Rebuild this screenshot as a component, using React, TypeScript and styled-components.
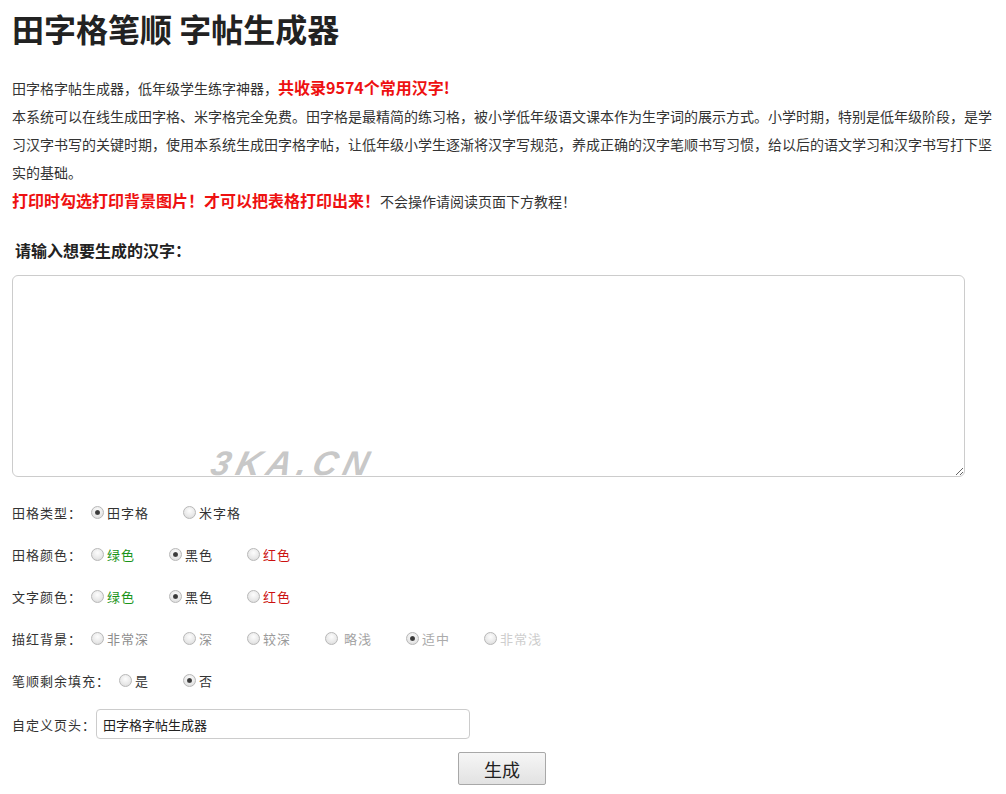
import React from "react";
import styled, { createGlobalStyle } from "styled-components";

const Global = createGlobalStyle`
  html, body { margin: 0; padding: 0; background: #fff; }
  body {
    font-family: "Noto Sans CJK SC", "Noto Sans", sans-serif;
    color: #333;
    font-size: 13px;
  }
`;

const Page = styled.div`
  width: 980px;
  padding: 0 12px;
`;

const Title = styled.h1`
  margin: 8px 0 0;
  font-size: 32px;
  line-height: 40px;
  font-weight: 700;
  color: #222;
`;

const Intro = styled.p`
  margin: 25px 0 0;
  font-size: 14px;
  line-height: 28px;
  width: 982px;
`;

const Justified = styled.span`
  display: block;
  width: 980px;
  text-align: justify;
  text-align-last: justify;
`;

const Red = styled.span<{ $size: number }>`
  color: #ee1111;
  font-weight: 700;
  font-size: ${(p) => p.$size}px;
`;

const Notice = styled.p`
  margin: 0;
  font-size: 14px;
  line-height: 28px;
`;

const InputLabel = styled.h3`
  margin: 23px 0 0 3px;
  font-size: 16px;
  line-height: 24px;
  font-weight: 700;
  color: #222;
`;

const AreaWrap = styled.div`
  position: relative;
  margin-top: 13px;
  width: 953px;
`;

const Area = styled.textarea`
  display: block;
  width: 953px;
  height: 202px;
  box-sizing: border-box;
  border: 1px solid #ccc;
  border-radius: 6px;
  padding: 6px;
  font-family: inherit;
  font-size: 14px;
  outline: none;
`;

const Watermark = styled.div`
  position: absolute;
  left: 200px;
  top: 171px;
  font-family: "Liberation Sans", Arial, sans-serif;
  font-style: italic;
  font-weight: 900;
  font-size: 34px;
  line-height: 34px;
  letter-spacing: 6px;
  color: rgba(175, 175, 175, 0.7);
  transform: skewX(-14deg);
  pointer-events: none;
`;

const Rows = styled.div`
  margin-top: 14px;
`;

const Row = styled.div`
  display: flex;
  align-items: center;
  height: 42px;
`;

const RowLabel = styled.span`
  font-size: 13px;
  letter-spacing: 1px;
  color: #333;
  margin-right: 9px;
  white-space: nowrap;
`;

const Option = styled.label`
  display: flex;
  align-items: center;
  margin-right: 34px;
  cursor: pointer;
`;

const Radio = styled.input.attrs({ type: "radio" })`
  appearance: none;
  -webkit-appearance: none;
  margin: 0 3px 0 0;
  width: 13px;
  height: 13px;
  border-radius: 50%;
  border: 1px solid #b8b8b8;
  box-sizing: border-box;
  background: radial-gradient(circle at 50% 35%, #fdfdfd 0%, #e8e8e8 60%, #d4d4d4 100%);
  position: relative;
  &:checked::after {
    content: "";
    position: absolute;
    left: 3px;
    top: 3px;
    width: 5px;
    height: 5px;
    border-radius: 50%;
    background: radial-gradient(circle, #3a3a3a 40%, #6a6a6a 100%);
  }
`;

const OptText = styled.span<{ $color: string; $lead?: number }>`
  font-size: 13px;
  letter-spacing: 1px;
  color: ${(p) => p.$color};
  padding-left: ${(p) => p.$lead ?? 0}px;
  white-space: nowrap;
`;

const HeaderRow = styled.div`
  display: flex;
  align-items: center;
  height: 44px;
  margin-top: 1px;
`;

const HeaderLabel = styled.span`
  font-size: 13px;
  letter-spacing: 1px;
  color: #333;
  width: 84px;
`;

const TextInput = styled.input`
  width: 374px;
  height: 30px;
  box-sizing: border-box;
  border: 1px solid #ccc;
  border-radius: 4px;
  padding: 0 6px;
  font-family: inherit;
  font-size: 13px;
  color: #222;
  outline: none;
`;

const Actions = styled.div`
  display: flex;
  justify-content: center;
  margin-top: 6px;
`;

const Button = styled.button`
  width: 88px;
  height: 33px;
  border: 1px solid #a8a8a8;
  border-radius: 2px;
  background: linear-gradient(#f6f6f6, #e2e2e2);
  font-family: inherit;
  font-size: 18px;
  color: #222;
  padding: 0;
  cursor: pointer;
`;

type Opt = { text: string; color: string; checked?: boolean; lead?: number };
type RowDef = { label: string; name: string; options: Opt[] };

const rows: RowDef[] = [
  {
    label: "田格类型：",
    name: "type",
    options: [
      { text: "田字格", color: "#333", checked: true },
      { text: "米字格", color: "#333" },
    ],
  },
  {
    label: "田格颜色：",
    name: "gridColor",
    options: [
      { text: "绿色", color: "#1a941a" },
      { text: "黑色", color: "#333", checked: true },
      { text: "红色", color: "#cc1111" },
    ],
  },
  {
    label: "文字颜色：",
    name: "textColor",
    options: [
      { text: "绿色", color: "#1a941a" },
      { text: "黑色", color: "#333", checked: true },
      { text: "红色", color: "#cc1111" },
    ],
  },
  {
    label: "描红背景：",
    name: "bg",
    options: [
      { text: "非常深", color: "#8c8c8c" },
      { text: "深", color: "#939393" },
      { text: "较深", color: "#9a9a9a" },
      { text: "略浅", color: "#a4a4a4", lead: 3 },
      { text: "适中", color: "#ababab", checked: true },
      { text: "非常浅", color: "#cdcdcd" },
    ],
  },
  {
    label: "笔顺剩余填充：",
    name: "fill",
    options: [
      { text: "是", color: "#333" },
      { text: "否", color: "#333", checked: true },
    ],
  },
];

export default function App() {
  return (
    <>
      <Global />
      <Page>
        <Title>田字格笔顺 字帖生成器</Title>
        <Intro>
          田字格字帖生成器，低年级学生练字神器，<Red $size={16}>共收录9574个常用汉字!</Red>
          <br />
          <Justified>
            本系统可以在线生成田字格、米字格完全免费。田字格是最精简的练习格，被小学低年级语文课本作为生字词的展示方式。小学时期，特别是低年级阶段，是学
          </Justified>
          习汉字书写的关键时期，使用本系统生成田字格字帖，让低年级小学生逐渐将汉字写规范，养成正确的汉字笔顺书写习惯，给以后的语文学习和汉字书写打下坚实的基础。
        </Intro>
        <Notice>
          <Red $size={16}>打印时勾选打印背景图片！才可以把表格打印出来！</Red>不会操作请阅读页面下方教程！
        </Notice>
        <InputLabel>请输入想要生成的汉字：</InputLabel>
        <AreaWrap>
          <Area />
          <Watermark>3KA.CN</Watermark>
        </AreaWrap>
        <Rows>
          {rows.map((r) => (
            <Row key={r.name}>
              <RowLabel>{r.label}</RowLabel>
              {r.options.map((o) => (
                <Option key={o.text}>
                  <Radio name={r.name} defaultChecked={o.checked} />
                  <OptText $color={o.color} $lead={o.lead}>
                    {o.text}
                  </OptText>
                </Option>
              ))}
            </Row>
          ))}
          <HeaderRow>
            <HeaderLabel>自定义页头：</HeaderLabel>
            <TextInput defaultValue="田字格字帖生成器" />
          </HeaderRow>
        </Rows>
        <Actions>
          <Button>生成</Button>
        </Actions>
      </Page>
    </>
  );
}
